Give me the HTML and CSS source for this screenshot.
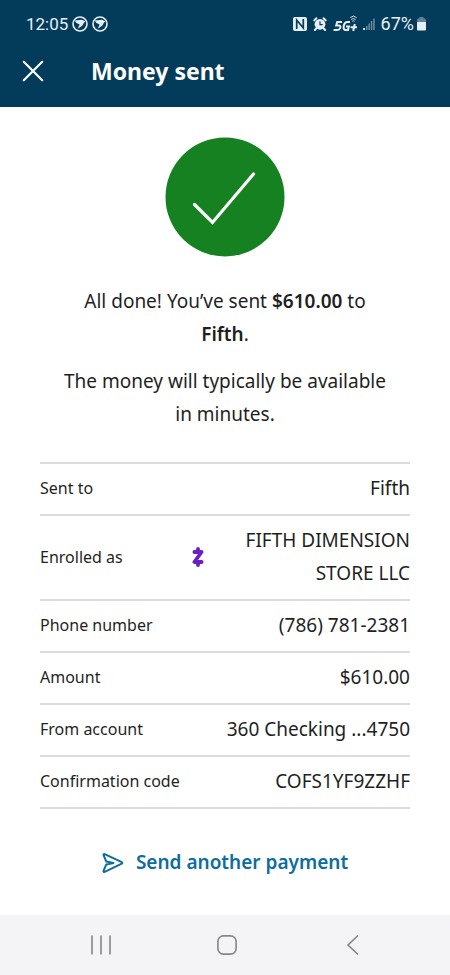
FILE: index.html
```html
<!DOCTYPE html>
<html lang="en">
<head>
<meta charset="utf-8">
<meta name="viewport" content="width=device-width, initial-scale=1">
<title>Money sent</title>
<link rel="stylesheet" href="styles.css">
</head>
<body>
<header class="top">
  <div class="status">
    <div class="status-group">
      <span>12:05</span>
      <svg class="bird" width="16" height="16" viewBox="0 0 16 16" aria-hidden="true"><circle cx="8" cy="8" r="7" fill="none" stroke="currentColor" stroke-width="1.6"/><path d="M2.6 4.4 9.8 3.8 13.4 5.2 11.8 7 10.4 9.4 5.8 12.8 7.6 8.6Q4 7.4 2.6 4.4Z" fill="currentColor"/></svg>
      <svg class="bird" width="16" height="16" viewBox="0 0 16 16" aria-hidden="true"><circle cx="8" cy="8" r="7" fill="none" stroke="currentColor" stroke-width="1.6"/><path d="M2.6 4.4 9.8 3.8 13.4 5.2 11.8 7 10.4 9.4 5.8 12.8 7.6 8.6Q4 7.4 2.6 4.4Z" fill="currentColor"/></svg>
    </div>
    <div class="status-group percent">
      <svg width="14" height="14" viewBox="0 0 14 14" aria-hidden="true"><rect width="14" height="14" rx="2" fill="currentColor"/><path d="M3.7 12V3L10.3 11V2" fill="none" stroke="#033c5a" stroke-width="1.7"/></svg>
      <svg class="alarm" width="14" height="14" viewBox="0 0 14 14" aria-hidden="true"><circle cx="7" cy="7.3" r="5.4" fill="currentColor"/><path d="M1.3 3.4 3.4 1.3M12.7 3.4 10.6 1.3M3.3 11.3 1.9 13M10.7 11.3 12.1 13" stroke="currentColor" stroke-width="2" stroke-linecap="round"/><path d="M7 4.2V7.6H9.7" fill="none" stroke="#033c5a" stroke-width="1.2"/></svg>
      <svg width="25" height="20" viewBox="0 0 25 20" role="img" aria-label="5G+"><g fill="none" stroke="currentColor" stroke-width="2"><path d="M9 8H4.2L3.2 11.6H5.8Q8 11.8 7.2 14Q6.4 16 4 16H.6"/><path d="M17 8H14.2Q11.4 8.2 10.7 12Q10.2 16 12.6 16H15L15.9 12.6H13"/><path d="M17.6 13.2H24M21.8 10 20.2 17"/></g><g fill="none" stroke="currentColor" stroke-width=".9"><path d="M17.2 3.6Q20.4.6 23.6 3.6M18.2 5.5Q20.4 3.6 22.6 5.5M19.2 7.3Q20.4 6.2 21.6 7.3"/></g></svg>
      <svg class="signal" width="12" height="14" viewBox="0 0 12 14" aria-hidden="true"><path d="M.2 11H2V13H.2Z" fill="currentColor"/><path d="M3 9H4.5V13H3ZM5.4 6.5H6.9V13H5.4ZM7.8 4H9.3V13H7.8ZM10.2 1.5H11.7V13H10.2Z" fill="currentColor" opacity=".45"/></svg>
      <span>67%</span>
      <svg class="battery" width="9" height="14" viewBox="0 0 9 14" aria-hidden="true"><path d="M2.5 0H6.5V1.5H8Q9 1.5 9 3V6H0V3Q0 1.5 1 1.5H2.5Z" fill="currentColor" opacity=".4"/><path d="M0 5H9V12.5Q9 13.5 8 13.5H1Q0 13.5 0 12.5Z" fill="currentColor"/></svg>
    </div>
  </div>
  <div class="titlebar">
    <button class="close" type="button" aria-label="Close"><svg width="22" height="22" viewBox="0 0 22 22"><path d="M1.8 1.8 20.2 20.2M20.2 1.8 1.8 20.2" stroke="currentColor" stroke-width="2.2" stroke-linecap="round"/></svg></button>
    <h1>Money sent</h1>
  </div>
</header>
<main>
  <svg class="check" width="120" height="120" viewBox="0 0 120 120" aria-hidden="true"><circle cx="60" cy="60" r="59.5" fill="#158121"/><path d="M29.5 67.5 47.5 85.5 88.5 37" fill="none" stroke="#fff" stroke-width="3.2" stroke-linecap="round"/></svg>
  <div class="message">
    <p>All done! You’ve sent <strong>$610.00</strong> to <strong>Fifth</strong>.</p>
    <p>The money will typically be available in minutes.</p>
  </div>
  <dl class="details">
    <div class="row"><dt>Sent to</dt><dd>Fifth</dd></div>
    <div class="row"><dt>Enrolled as</dt><dd class="enrolled"><svg width="12" height="20" viewBox="0 0 12 20" aria-hidden="true"><path d="M6 2V5M6 15V18M2.4 5H9.6L2.4 15H9.6" fill="none" stroke="#6a1fc4" stroke-width="3.8" stroke-linecap="round" stroke-linejoin="round"/></svg><span>FIFTH DIMENSION STORE LLC</span></dd></div>
    <div class="row"><dt>Phone number</dt><dd>(786) 781-2381</dd></div>
    <div class="row"><dt>Amount</dt><dd>$610.00</dd></div>
    <div class="row"><dt>From account</dt><dd>360 Checking ...4750</dd></div>
    <div class="row"><dt>Confirmation code</dt><dd>COFS1YF9ZZHF</dd></div>
  </dl>
  <a class="again" href="#"><svg width="22" height="20" viewBox="0 0 22 20" aria-hidden="true"><path d="M1.6 2.2Q1.3.8 2.7 1.2L19.8 9.2Q20.8 10 19.8 10.7L2.7 18.8Q1.2 19.2 1.6 17.6L4.3 11.4 11.5 10 4.3 8.6Z" fill="none" stroke="currentColor" stroke-width="2" stroke-linejoin="round"/></svg>Send another payment</a>
</main>
<nav class="system" aria-label="System">
  <button type="button" aria-label="Recent apps"><svg width="22" height="22" viewBox="0 0 22 22"><path d="M2 1.5V20.5M11 1.5V20.5M20 1.5V20.5" stroke="currentColor" stroke-width="1.6"/></svg></button>
  <button type="button" aria-label="Home"><svg width="22" height="22" viewBox="0 0 22 22"><rect x="1.9" y="1.9" width="18.2" height="18.2" rx="5.5" fill="none" stroke="currentColor" stroke-width="1.6"/></svg></button>
  <button type="button" aria-label="Back"><svg width="22" height="22" viewBox="0 0 22 22"><path d="M16 1.5 6 11 16 20.5" fill="none" stroke="currentColor" stroke-width="1.6"/></svg></button>
</nav>
</body>
</html>
```
FILE: styles.css
```css
* {
  box-sizing: border-box;
}

body {
  margin: 0;
  min-height: 100vh;
  display: flex;
  flex-direction: column;
  background: #fff;
  color: #1f1f1f;
  font-family: "Noto Sans", sans-serif;
}

svg {
  display: block;
  flex: none;
}

button {
  padding: 0;
  border: 0;
  background: none;
  color: inherit;
}

.top {
  background: #033c5a;
  color: #fff;
  padding: 12px 24px 18px;
}

.status {
  display: flex;
  justify-content: space-between;
  padding-left: 2px;
  color: #e6f0f4;
  font: 17px/24px Roboto, sans-serif;
}

.status-group {
  display: flex;
  align-items: center;
}

.percent {
  font-size: 18px;
}

.bird {
  margin-left: 4px;
}

.alarm {
  margin: 0 6px;
}

.signal {
  margin: 0 6px 0 5px;
}

.battery {
  margin-left: 3px;
}

.titlebar {
  display: flex;
  align-items: center;
  gap: 47px;
  margin-top: 17px;
}

.close {
  margin-left: -2px;
}

h1 {
  margin: 0;
  font-size: 23px;
  line-height: 36px;
  font-weight: 700;
}

main {
  flex: 1;
  display: flex;
  flex-direction: column;
  align-items: center;
  padding: 30px 40px;
}

.message {
  margin-top: 28px;
  padding: 0 20px;
  font-size: 19px;
  line-height: 33px;
  text-align: center;
}

.message p {
  margin: 0 0 14px;
}

.message strong {
  font-weight: 600;
}

.details {
  width: 100%;
  margin: 17px 0 0;
  border-top: 2px solid #dcdcdc;
}

.row {
  display: flex;
  align-items: center;
  justify-content: space-between;
  padding: 8px 0 9px;
  border-bottom: 2px solid #dcdcdc;
  line-height: 33px;
}

dt {
  font-size: 16px;
}

dd {
  margin: 0;
  font-size: 19px;
  text-align: right;
}

.enrolled {
  display: flex;
  align-items: center;
  justify-content: space-between;
  width: 59%;
}

.enrolled span {
  width: 190px;
}

.again {
  display: flex;
  align-items: center;
  gap: 12px;
  margin-top: 37px;
  color: #0d6d9d;
  font-size: 19px;
  line-height: 33px;
  font-weight: 600;
  text-decoration: none;
}

.system {
  display: flex;
  justify-content: space-between;
  align-items: center;
  height: 60px;
  padding: 0 86px 0 90px;
  background: #f4f4f6;
  color: #85858a;
}
```
